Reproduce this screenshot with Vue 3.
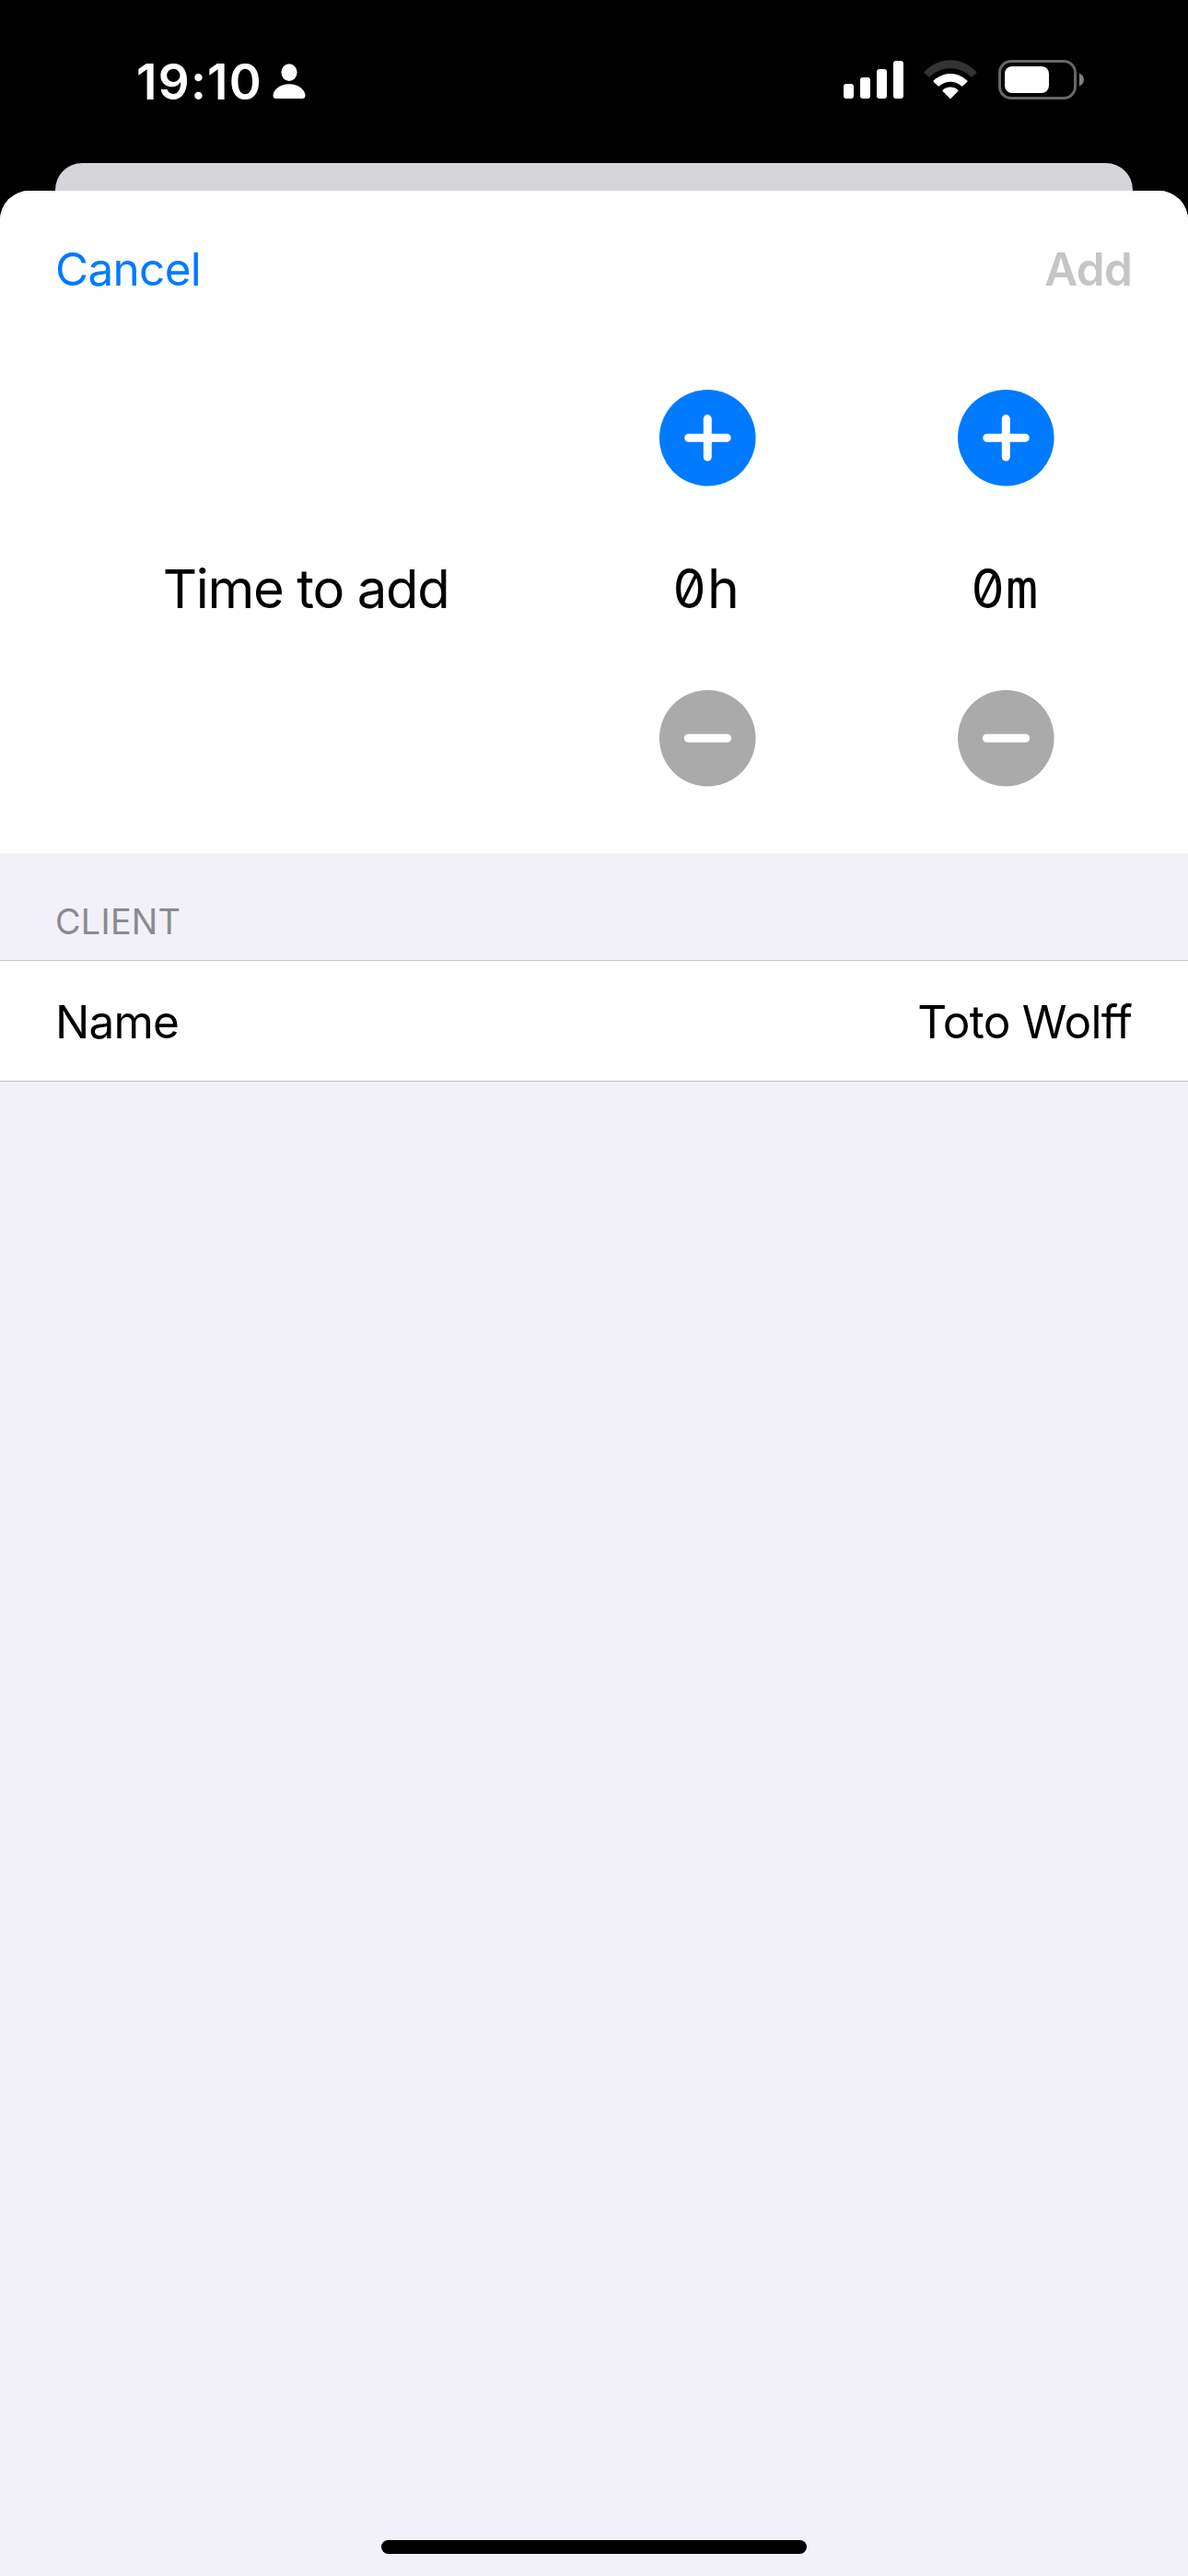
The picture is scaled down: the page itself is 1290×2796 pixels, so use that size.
<script setup>
import { ref } from 'vue'

const units = ref([
  { value: 0, suffix: 'h' },
  { value: 0, suffix: 'm' },
])
const client = ref('Toto Wolff')
</script>

<template>
  <div class="screen">
    <header class="status">
      <div class="clock">
        <span class="time">19:10</span>
        <svg class="person" width="36" height="39" viewBox="0 0 36 39">
          <ellipse cx="18" cy="9.6" rx="8.6" ry="9.4" />
          <path d="M4 38C1.600 38 .5 36.700 .5 34.700C.5 29.500 7 22.200 18 22.200S35.500 29.500 35.500 34.700C35.500 36.700 34.400 38 32 38Z" />
        </svg>
      </div>
      <div class="indicators">
        <svg width="66" height="42" viewBox="0 0 66 42" fill="#fff">
          <rect x="0" y="25" width="11" height="16" rx="3" />
          <rect x="18" y="18" width="11" height="23" rx="3" />
          <rect x="36" y="9" width="11" height="32" rx="3" />
          <rect x="54" y="0" width="11" height="41" rx="3" />
        </svg>
        <svg class="wifi" width="58" height="43" viewBox="0 0 58 43">
          <path d="M.8 13C16.500 -3.900 41.500 -3.900 57.200 13Q57.800 13.600 57.200 14.200L52.400 18.500Q52 18.900 51.500 18.400C39 6.200 19 6.200 6.500 18.400Q6 18.900 5.600 18.500L.8 14.200Q.2 13.600 .8 13Z" fill="#333" />
          <path d="M10.700 22.600C21 12.300 37 12.300 47.300 22.600Q47.900 23.200 47.300 23.800L42.300 28.600Q41.800 29.100 41.300 28.600C34.200 22 23.800 22 16.700 28.600Q16.200 29.100 15.700 28.600L10.700 23.800Q10.100 23.200 10.700 22.600Z" fill="#fff" />
          <path d="M20.700 32.700C25.400 28.300 32.600 28.300 37.300 32.700Q37.900 33.300 37.300 33.900L29.600 41.700Q29 42.300 28.400 41.700L20.700 33.900Q20.100 33.300 20.700 32.700Z" fill="#fff" />
        </svg>
        <svg class="battery" width="94" height="44" viewBox="0 0 94 44">
          <rect x="1.500" y="1.500" width="82" height="40" rx="12.500" fill="none" stroke="#666" stroke-width="3" />
          <rect x="7" y="7" width="48" height="29" rx="8" fill="#fff" />
          <path d="M88 14.500C91 15.700 93 18.400 93 21.500S91 27.300 88 28.500Z" fill="#808080" />
        </svg>
      </div>
    </header>

    <div class="backdrop"></div>

    <main class="sheet">
      <nav class="toolbar">
        <span class="cancel">Cancel</span>
        <span class="add">Add</span>
      </nav>

      <section class="picker">
        <div class="label"><span>Time to add</span></div>
        <div v-for="unit in units" :key="unit.suffix" class="stepper">
          <svg class="button" viewBox="0 0 105 105">
            <circle cx="52.300" cy="52.300" r="52.300" fill="#007aff" />
            <path d="M31.800 52.300H73.200M52.300 31.600V73" />
          </svg>
          <div class="value">
            <span class="digit">{{ unit.value }}</span><span class="suffix" :class="unit.suffix">{{ unit.suffix }}</span>
          </div>
          <svg class="button" viewBox="0 0 105 105">
            <circle cx="52.300" cy="52.300" r="52.300" fill="#aaa" />
            <path d="M31.300 52.300H73.700" />
          </svg>
        </div>
      </section>

      <section class="details">
        <h2><span>CLIENT</span></h2>
        <div class="row">
          <span class="name">Name</span>
          <span class="client">{{ client }}</span>
        </div>
      </section>

      <div class="home"></div>
    </main>
  </div>
</template>

<style>
body {
  margin: 0;
  background: #000;
}
</style>

<style scoped>
.screen {
  display: flex;
  flex-direction: column;
  width: 1290px;
  height: 2796px;
  overflow: hidden;
  background: #000;
  color: #000;
  font-family: Inter, "Liberation Sans", sans-serif;
  font-size: 49.5px;
  white-space: nowrap;
}
.status {
  box-sizing: border-box;
  display: flex;
  justify-content: space-between;
  align-items: flex-start;
  height: 177px;
  padding: 64px 112px 0 148px;
}
.clock {
  display: flex;
  align-items: center;
  height: 48px;
}
.time {
  width: 148px;
  color: #fff;
  font-size: 53px;
  font-weight: 560;
  line-height: 50px;
  padding-top: 1px;
  letter-spacing: 1.3px;
}
.person {
  fill: #fff;
}
.indicators {
  display: flex;
  align-items: flex-start;
  padding-top: 1px;
}
.indicators > svg {
  flex: none;
}
.indicators > svg:first-child {
  margin-top: 1px;
}
.wifi {
  margin-left: 21px;
}
.battery {
  margin-left: 23px;
}
.backdrop {
  height: 30px;
  margin: 0 60px;
  border-radius: 29px 29px 0 0;
  background: #d5d4d9;
}
.sheet {
  display: flex;
  flex-direction: column;
  flex: 1;
  border-radius: 32px 32px 0 0;
  background: #f2f1f7;
  overflow: hidden;
}
.toolbar {
  display: flex;
  justify-content: space-between;
  align-items: center;
  height: 170px;
  padding: 0 61px 0 60px;
  background: #fff;
}
.cancel {
  color: #007aff;
  letter-spacing: -0.7px;
}
.add {
  color: #c5c5c7;
  font-weight: 600;
  letter-spacing: -0.8px;
}
.picker {
  display: grid;
  grid-template-columns: 1fr 324px 324px;
  box-sizing: border-box;
  height: 549px;
  padding: 46px 36px 72px 58px;
  background: #fff;
}
.label {
  display: flex;
  align-items: center;
  justify-content: center;
  height: 431px;
  font-size: 58px;
  letter-spacing: -1.35px;
}
.stepper {
  display: flex;
  flex-direction: column;
  align-items: center;
}
.button {
  flex: none;
  width: 105px;
  height: 105px;
}
.button path {
  fill: none;
  stroke: #fff;
  stroke-width: 9;
  stroke-linecap: round;
}
.value {
  display: flex;
  align-items: baseline;
  justify-content: center;
  height: 221px;
  padding-right: 2px;
  font-size: 59px;
  line-height: 221px;
}
.value span {
  display: flex;
  justify-content: center;
  width: 37px;
}
.digit {
  font-feature-settings: "zero" 1;
  font-weight: 430;
  transform: scaleX(0.96);
}
.suffix.m {
  font-family: "DejaVu Sans Mono", monospace;
}
.details h2 {
  display: flex;
  align-items: center;
  height: 84px;
  margin: 0;
  padding: 32px 60px 0;
  color: #8a8a8e;
  font-size: 37.8px;
  font-weight: 400;
  letter-spacing: 0.25px;
}
.row {
  box-sizing: border-box;
  display: flex;
  align-items: center;
  justify-content: space-between;
  height: 132px;
  padding: 2px 61px 0 60px;
  border-top: 1px solid #c6c5ca;
  border-bottom: 1px solid #c6c5ca;
  background: #fff;
}
.name {
  letter-spacing: -0.8px;
}
.client {
  letter-spacing: -0.7px;
}
.home {
  width: 462px;
  height: 15px;
  margin: auto auto 24px;
  border-radius: 8px;
  background: #000;
}
</style>
